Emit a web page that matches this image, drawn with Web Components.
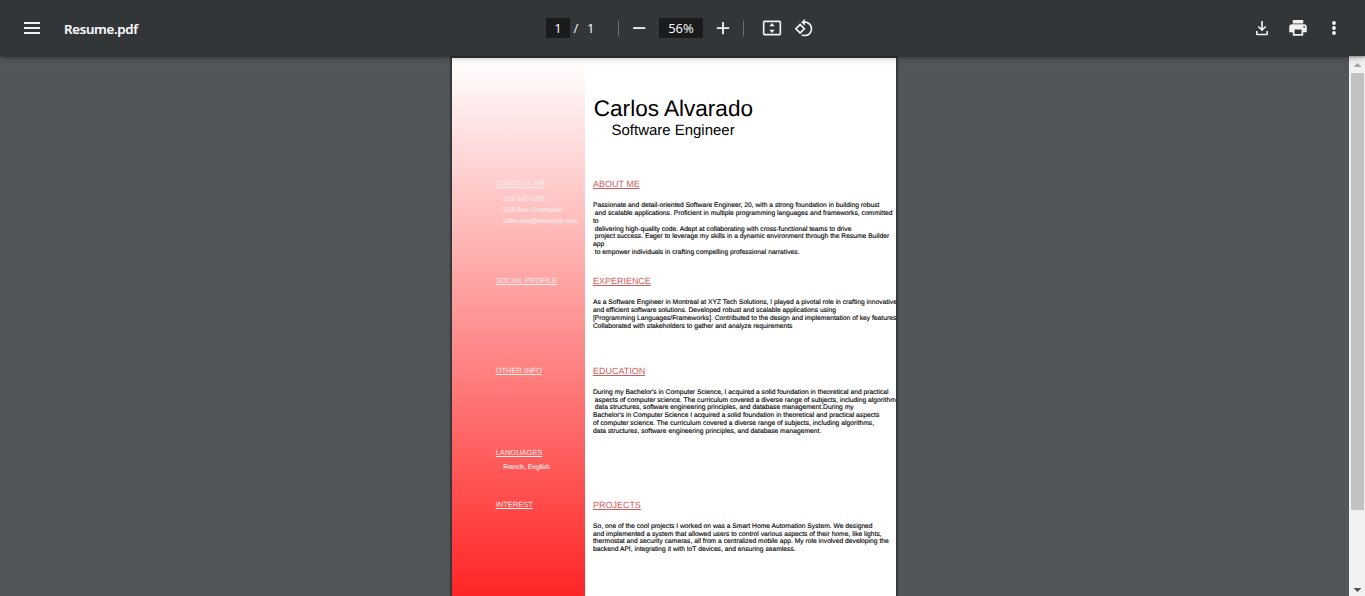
<!DOCTYPE html>
<html lang="en">
<head>
<meta charset="utf-8">
<title>Resume.pdf</title>
<style>
html,body{margin:0;height:100%;overflow:hidden;background:#525659}
</style>
</head>
<body>
<pdf-viewer></pdf-viewer>
<script>
function define(name, html, ready) {
  const tpl = document.createElement('template');
  tpl.innerHTML = html;
  customElements.define(name, class extends HTMLElement {
    connectedCallback() {
      if (this.shadowRoot) return;
      this.attachShadow({ mode: 'open' }).append(tpl.content.cloneNode(true));
      if (ready) ready(this, this.shadowRoot);
    }
  });
}

const icons = {
  menu: [24, '<path d="M4 6h16v2H4zM4 11h16v2H4zM4 16h16v2H4z"/>'],
  minus: [20, '<path d="M5 11h14.5v2.2H5z"/>'],
  plus: [20, '<path d="M4.6 11h6.3V4.7h2.2V11h6.3v2.2h-6.3v6.2h-2.2v-6.2H4.6z"/>'],
  fit: [20, '<path fill-rule="evenodd" d="M3 3h18a2 2 0 0 1 2 2v14a2 2 0 0 1-2 2H3a2 2 0 0 1-2-2V5c0-1.1.9-2 2-2zm0 2v14h18V5z"/><path d="M12 6l3.2 4H8.800zM12 18l3.2-4H8.800z"/>'],
  rotate: [20, '<path d="M7.34 6.41L.86 12.9l6.49 6.48 6.49-6.48-6.5-6.49zM3.69 12.9l3.66-3.66L11 12.9l-3.66 3.66-3.65-3.66zm15.67-6.26C17.61 4.88 15.3 4 13 4V.76L8.76 5 13 9.24V6c1.79 0 3.58.68 4.95 2.05 2.73 2.73 2.73 7.17 0 9.9C16.58 19.32 14.79 20 13 20c-.97 0-1.94-.21-2.84-.61l-1.49 1.49C10.02 21.62 11.51 22 13 22c2.3 0 4.61-.88 6.36-2.64 3.52-3.51 3.52-9.21 0-12.72z"/>'],
  download: [20, '<path d="M11 3.600h2v8.600l2.700-2.700 1.400 1.400L12 16 6.900 10.900l1.400-1.400 2.700 2.700zM4.800 15.500h1.900v3.300h10.600v-3.300h1.900v3.400a1.800 1.800 0 0 1-1.800 1.800H6.600a1.800 1.800 0 0 1-1.800-1.800z"/>'],
  print: [20, '<path transform="translate(-.6 -.8) scale(1.050)" d="M19 8H5c-1.660 0-3 1.340-3 3v6h4v4h12v-4h4v-6c0-1.660-1.340-3-3-3zm-3 11H8v-5h8v5zm3-7c-.55 0-1-.45-1-1s.45-1 1-1 1 .45 1 1-.45 1-1 1zm-1-9H6v4h12V3z"/>'],
  more: [20, '<circle cx="12" cy="6" r="2.300"/><circle cx="12" cy="12" r="2.300"/><circle cx="12" cy="18" r="2.300"/>']
};

define('tool-icon', `<style>
:host{display:flex;align-items:center;justify-content:center;width:32px;height:32px;flex:none}
svg{display:block;fill:#f1f1f1}
</style>`, (el, root) => {
  const [size, body] = icons[el.getAttribute('name')];
  root.innerHTML += `<svg width="${size}" height="${size}" viewBox="0 0 24 24">${body}</svg>`;
});

define('tool-field', `<style>
:host{display:flex;align-items:center;justify-content:center;height:20px;background:#191b1c;flex:none}
</style><slot></slot>`);

define('pdf-toolbar', `<style>
:host{display:grid;grid-template-columns:546px 1fr auto;align-items:center;height:56px;box-sizing:border-box;background:#323639;color:#fff;
 font:13px/20px "Open Sans","Noto Sans",sans-serif;box-shadow:0 -2px 8px rgba(0,0,0,.09),0 4px 8px rgba(0,0,0,.06),0 1px 2px rgba(0,0,0,.3),0 2px 6px rgba(0,0,0,.15);position:relative;z-index:2}
.left,.mid,.right{display:flex;align-items:center}
.left{padding-left:16px}
.name{margin-left:16px;font-weight:600;font-size:13.300px;letter-spacing:-.25px;padding-top:1px;-webkit-text-stroke:.2px #fff}
.page{width:24px}.zoom{width:44px}
.slash{width:12px;text-align:center}
.total{width:18px;text-align:center;letter-spacing:.5px}
.sep{width:1px;height:15px;background:#6b6e70;margin-left:18px}
.mid tool-icon{width:24px}
.minus{margin:0 8px 0 8px}.plus{margin-left:8px}
.s2{margin-left:8px}
.mid .fit{margin-left:16px}.mid .rot{margin-left:8px}
.right{padding-right:15px;gap:4px}
</style>
<div class="left"><tool-icon name="menu"></tool-icon><span class="name">Resume.pdf</span></div>
<div class="mid"><tool-field class="page">1</tool-field><span class="slash">/</span><span class="total">1</span>
<span class="sep"></span><tool-icon class="minus" name="minus"></tool-icon><tool-field class="zoom">56%</tool-field><tool-icon class="plus" name="plus"></tool-icon>
<span class="sep s2"></span><tool-icon class="fit" name="fit"></tool-icon><tool-icon class="rot" name="rotate"></tool-icon></div>
<div class="right"><tool-icon name="download"></tool-icon><tool-icon name="print"></tool-icon><tool-icon name="more"></tool-icon></div>`);

define('page-scrollbar', `<style>
:host{display:flex;flex-direction:column;align-items:center;width:16px;height:100%;background:#f1f1f1}
svg{display:block;flex:none}
.thumb{width:13px;height:437px;background:#c1c1c1;margin-left:1px}
.gap{flex:1}
</style>
<svg width="16" height="17" viewBox="0 0 16 17"><path d="M4.500 11h8L8.500 7z" fill="#a3a3a3"/></svg>
<div class="thumb"></div><div class="gap"></div>
<svg width="16" height="14" viewBox="0 0 16 14"><path d="M4.500 6h8L8.500 10z" fill="#505050"/></svg>`);

define('side-section', `<style>
:host{display:block;box-sizing:border-box;padding-left:43.700px;color:#fbecec;white-space:pre}
h3{margin:0;font-weight:400;font-size:7.520px;line-height:10px;text-decoration:underline;text-decoration-thickness:1px;text-underline-offset:1px}
.body{padding:4.800px 0 0 7.500px;font-size:6.720px;line-height:11.100px;-webkit-text-stroke:.1px currentColor}
</style><h3></h3><div class="body"><slot></slot></div>`, (el, root) => {
  root.querySelector('h3').textContent = el.getAttribute('heading');
});

define('main-section', `<style>
:host{display:block;color:#000;white-space:pre}
h2{margin:0;font-weight:400;font-size:8.980px;line-height:10px;color:#cd5c5c;text-decoration:underline;text-decoration-thickness:1px;text-underline-offset:1px}
.body{padding-top:13.300px;font-size:6.726px;line-height:7.720px;-webkit-text-stroke:.12px #000}
</style><h2></h2><div class="body"><slot></slot></div>`, (el, root) => {
  root.querySelector('h2').textContent = el.getAttribute('heading');
});

define('resume-page', `<style>
:host{display:grid;grid-template-columns:133px 311px;width:444px;height:629px;background:#fff;overflow:hidden;
 font-family:"Liberation Sans",Arial,sans-serif;text-rendering:geometricPrecision;box-shadow:0 0 0 2px rgba(40,43,45,.55),0 0 4px rgba(0,0,0,.3)}
aside{background:linear-gradient(#fff,#f00);padding-top:121px}
main{padding:38px 0 0 8px;overflow:hidden}
h1{margin:0 0 0 .8px;font-weight:400;font-size:22.550px;line-height:26px;color:#000}
.role{margin-left:18.500px;font-size:14.980px;line-height:17px;color:#000}
.sections{padding-top:40.200px}
.h97{height:97px}.h895{height:89.500px}.h82{height:82px}.h52{height:52.500px}.h134{height:134px}
</style>
<aside>
<side-section class="h97" heading="CONTACT ME">513-345-6789
123 Rue Champlain
John.doe@example.com</side-section>
<side-section class="h895" heading="SOCIAL PROFILE"></side-section>
<side-section class="h82" heading="OTHER INFO"></side-section>
<side-section class="h52" heading="LANGUAGES">French, English</side-section>
<side-section heading="INTEREST"></side-section>
</aside>
<main>
<h1>Carlos Alvarado</h1><div class="role">Software Engineer</div>
<div class="sections">
<main-section class="h97" heading="ABOUT ME">Passionate and detail-oriented Software Engineer, 20, with a strong foundation in building robust
 and scalable applications. Proficient in multiple programming languages and frameworks, committed
to
 delivering high-quality code. Adept at collaborating with cross-functional teams to drive
 project success. Eager to leverage my skills in a dynamic environment through the Resume Builder
app
 to empower individuals in crafting compelling professional narratives.</main-section>
<main-section class="h895" heading="EXPERIENCE">As a Software Engineer in Montreal at XYZ Tech Solutions, I played a pivotal role in crafting innovative
and efficient software solutions. Developed robust and scalable applications using
[Programming Languages/Frameworks]. Contributed to the design and implementation of key features
Collaborated with stakeholders to gather and analyze requirements</main-section>
<main-section class="h134" heading="EDUCATION">During my Bachelor's in Computer Science, I acquired a solid foundation in theoretical and practical
 aspects of computer science. The curriculum covered a diverse range of subjects, including algorithm
 data structures, software engineering principles, and database management.During my
Bachelor's in Computer Science I acquired a solid foundation in theoretical and practical aspects
of computer science. The curriculum covered a diverse range of subjects, including algorithms,
data structures, software engineering principles, and database management.</main-section>
<main-section heading="PROJECTS">So, one of the cool projects I worked on was a Smart Home Automation System. We designed
and implemented a system that allowed users to control various aspects of their home, like lights,
thermostat and security cameras, all from a centralized mobile app. My role involved developing the
backend API, integrating it with IoT devices, and ensuring seamless.</main-section>
</div>
</main>`);

define('pdf-viewer', `<style>
:host{display:flex;flex-direction:column;width:100vw;height:100vh;overflow:hidden;background:#525659}
.content{flex:1;min-height:0;display:flex;overflow:hidden}
.canvas{flex:1;display:flex;justify-content:center;align-items:flex-start;padding:2px 1px 0 0;box-sizing:border-box;overflow:hidden}
</style>
<pdf-toolbar></pdf-toolbar>
<div class="content"><div class="canvas"><resume-page></resume-page></div><page-scrollbar></page-scrollbar></div>`);
</script>
</body>
</html>
